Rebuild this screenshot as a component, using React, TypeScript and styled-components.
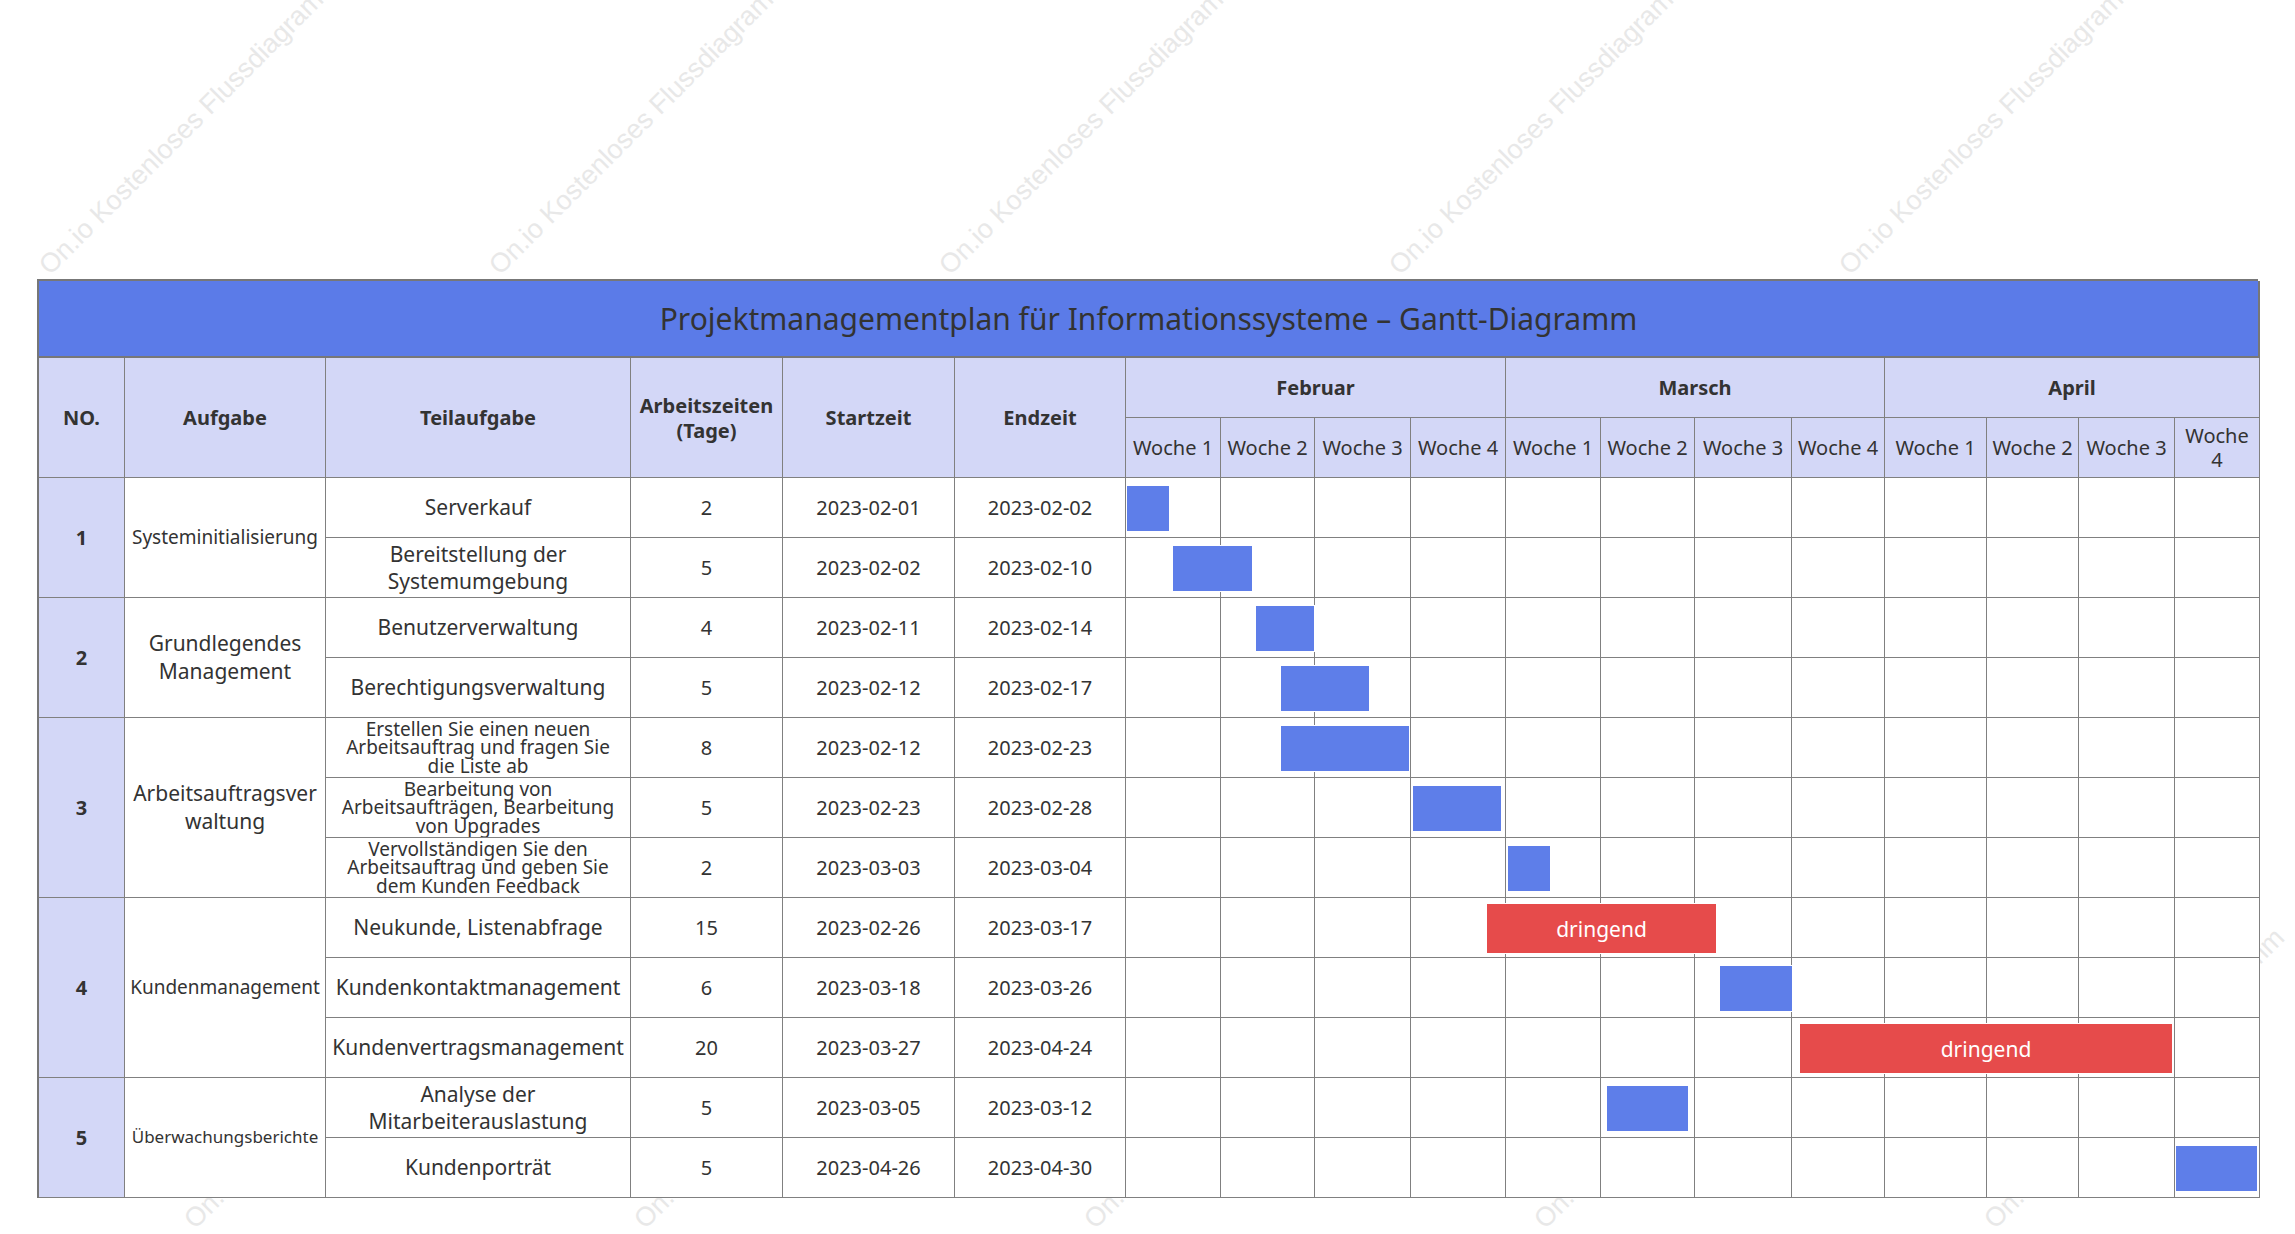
import React from "react";
import styled, { createGlobalStyle } from "styled-components";

const Global = createGlobalStyle`
  html, body { margin: 0; padding: 0; background: #fff; }
  body { font-family: "Noto Sans", "Open Sans", sans-serif; color: #333; }
`;

const Page = styled.div`
  position: relative;
  width: 2295px;
  height: 1234px;
  overflow: hidden;
  padding: 279px 0 0 37px;
  box-sizing: border-box;
`;

const cols = [86, 201, 305, 152, 172, 171, 95, 94, 96, 95, 95, 94, 97, 93, 102, 92, 96, 85];

const Grid = styled.div`
  position: relative;
  z-index: 1;
  display: grid;
  grid-template-columns: ${cols.map((c) => c + "px").join(" ")};
  grid-template-rows: 77px 60px 60px repeat(12, 60px);
  width: 2221px;
  border-top: 2px solid #777;
  border-left: 2px solid #777;
  box-sizing: border-box;
`;

const Cell = styled.div<{ $r: number; $c: number; $rs?: number; $cs?: number; $head?: boolean; $size?: number; $bold?: boolean; $lh?: number; $pad?: number; $break?: boolean }>`
  grid-row: ${(p) => p.$r} / span ${(p) => p.$rs || 1};
  grid-column: ${(p) => p.$c} / span ${(p) => p.$cs || 1};
  background: ${(p) => (p.$head ? "#d3d7f7" : "#fff")};
  border-right: 1.5px solid #808080;
  border-bottom: 1.5px solid #808080;
  display: flex;
  align-items: center;
  justify-content: center;
  text-align: center;
  font-size: ${(p) => p.$size || 20}px;
  font-weight: ${(p) => (p.$bold ? 700 : 400)};
  line-height: ${(p) => p.$lh || 1.3};
  word-break: ${(p) => (p.$break ? "break-all" : "normal")};
  color: #333;
  overflow: hidden;
  box-sizing: border-box;
  padding: 0 ${(p) => p.$pad ?? 2}px;
`;

const Title = styled.div`
  grid-row: 1;
  grid-column: 1 / -1;
  background: #5b7be8;
  border-right: 2px solid #777;
  border-bottom: 2px solid #777;
  display: flex;
  align-items: center;
  justify-content: center;
  font-size: 30px;
  color: #333;
`;

const BarLayer = styled.div<{ $r: number }>`
  grid-row: ${(p) => p.$r};
  grid-column: 7 / -1;
  position: relative;
  z-index: 2;
  pointer-events: none;
`;

const Bar = styled.div<{ $red?: boolean }>`
  position: absolute;
  top: ${(p) => (p.$red ? 5 : 7)}px;
  height: ${(p) => (p.$red ? 51 : 47)}px;
  background: ${(p) => (p.$red ? "#e64b4b" : "#5e7ee9")};
  border: 1px solid #fff;
  box-sizing: border-box;
  display: flex;
  align-items: center;
  justify-content: center;
  color: #fff;
  font-size: 21px;
`;

const Mark = styled.div`
  position: absolute;
  font-family: "Liberation Sans", Arial, sans-serif;
  font-size: 27px;
  color: #e8e8e8;
  white-space: nowrap;
  transform: rotate(-45deg);
  transform-origin: left bottom;
  z-index: 0;
`;

const rows = [
  ["Serverkauf", "2", "2023-02-01", "2023-02-02"],
  ["Bereitstellung der Systemumgebung", "5", "2023-02-02", "2023-02-10"],
  ["Benutzerverwaltung", "4", "2023-02-11", "2023-02-14"],
  ["Berechtigungsverwaltung", "5", "2023-02-12", "2023-02-17"],
  ["Erstellen Sie einen neuen Arbeitsauftrag und fragen Sie die Liste ab", "8", "2023-02-12", "2023-02-23"],
  ["Bearbeitung von Arbeitsaufträgen, Bearbeitung von Upgrades", "5", "2023-02-23", "2023-02-28"],
  ["Vervollständigen Sie den Arbeitsauftrag und geben Sie dem Kunden Feedback", "2", "2023-03-03", "2023-03-04"],
  ["Neukunde, Listenabfrage", "15", "2023-02-26", "2023-03-17"],
  ["Kundenkontaktmanagement", "6", "2023-03-18", "2023-03-26"],
  ["Kundenvertragsmanagement", "20", "2023-03-27", "2023-04-24"],
  ["Analyse der Mitarbeiterauslastung", "5", "2023-03-05", "2023-03-12"],
  ["Kundenporträt", "5", "2023-04-26", "2023-04-30"],
];

const bars: [number, number, boolean?][] = [
  [1124, 1168], [1170, 1251], [1253, 1313], [1278, 1368], [1278, 1408], [1410, 1500],
  [1505, 1549], [1484, 1715, true], [1717, 1791], [1797, 2171, true], [1604, 1687], [2173, 2256],
];

const groups = [
  { no: "1", name: "Systeminitialisierung", start: 0, span: 2, size: 19 },
  { no: "2", name: "Grundlegendes Management", start: 2, span: 2, size: 21 },
  { no: "3", name: "Arbeitsauftragsverwaltung", start: 4, span: 3, size: 21 },
  { no: "4", name: "Kundenmanagement", start: 7, span: 3, size: 19 },
  { no: "5", name: "Überwachungsberichte", start: 10, span: 2, size: 17 },
];

const months = ["Februar", "Marsch", "April"];

export default function App() {
  const marks: { x: number; y: number }[] = [];
  [0, 450, 900, 1350, 1800].forEach((x) => {
    marks.push({ x: x + 55, y: 280 });
    marks.push({ x: x + 200, y: 1234 });
  });
  return (
    <Page>
      <Global />
      {marks.map((m, i) => (
        <Mark key={i} style={{ left: m.x, top: m.y - 30 }}>On.io Kostenloses Flussdiagramm</Mark>
      ))}
      <Grid>
        <Title>Projektmanagementplan für Informationssysteme – Gantt-Diagramm</Title>
        <Cell $r={2} $rs={2} $c={1} $head $bold>NO.</Cell>
        <Cell $r={2} $rs={2} $c={2} $head $bold>Aufgabe</Cell>
        <Cell $r={2} $rs={2} $c={3} $head $bold>Teilaufgabe</Cell>
        <Cell $r={2} $rs={2} $c={4} $head $bold $lh={1.25}>Arbeitszeiten<br />(Tage)</Cell>
        <Cell $r={2} $rs={2} $c={5} $head $bold>Startzeit</Cell>
        <Cell $r={2} $rs={2} $c={6} $head $bold>Endzeit</Cell>
        {months.map((m, i) => (
          <Cell key={m} $r={2} $c={7 + i * 4} $cs={4} $head $bold>{m}</Cell>
        ))}
        {Array.from({ length: 12 }).map((_, i) => (
          <Cell key={i} $r={3} $c={7 + i} $head $lh={1.2}>
            {i === 11 ? <span>Woche<br />4</span> : `Woche ${(i % 4) + 1}`}
          </Cell>
        ))}
        {groups.map((g) => (
          <React.Fragment key={g.no}>
            <Cell $r={4 + g.start} $rs={g.span} $c={1} $head $bold>{g.no}</Cell>
            <Cell $r={4 + g.start} $rs={g.span} $c={2} $size={g.size} $break={g.no === "3"} $pad={g.no === "3" ? 8 : 1}>{g.name}</Cell>
          </React.Fragment>
        ))}
        {rows.map((r, i) => {
          const long = r[0].length > 45;
          return (
            <React.Fragment key={i}>
              <Cell $r={4 + i} $c={3} $size={long ? 19 : 21} $lh={long ? 0.98 : 1.25} $pad={long ? 8 : 2}>{r[0]}</Cell>
              <Cell $r={4 + i} $c={4}>{r[1]}</Cell>
              <Cell $r={4 + i} $c={5}>{r[2]}</Cell>
              <Cell $r={4 + i} $c={6}>{r[3]}</Cell>
              {cols.slice(6).map((_, w) => (
                <Cell key={w} $r={4 + i} $c={7 + w} />
              ))}
              <BarLayer $r={4 + i}>
                <Bar $red={bars[i][2]} style={{ left: bars[i][0] - 1124, width: bars[i][1] - bars[i][0] }}>
                  {bars[i][2] ? "dringend" : ""}
                </Bar>
              </BarLayer>
            </React.Fragment>
          );
        })}
      </Grid>
    </Page>
  );
}
